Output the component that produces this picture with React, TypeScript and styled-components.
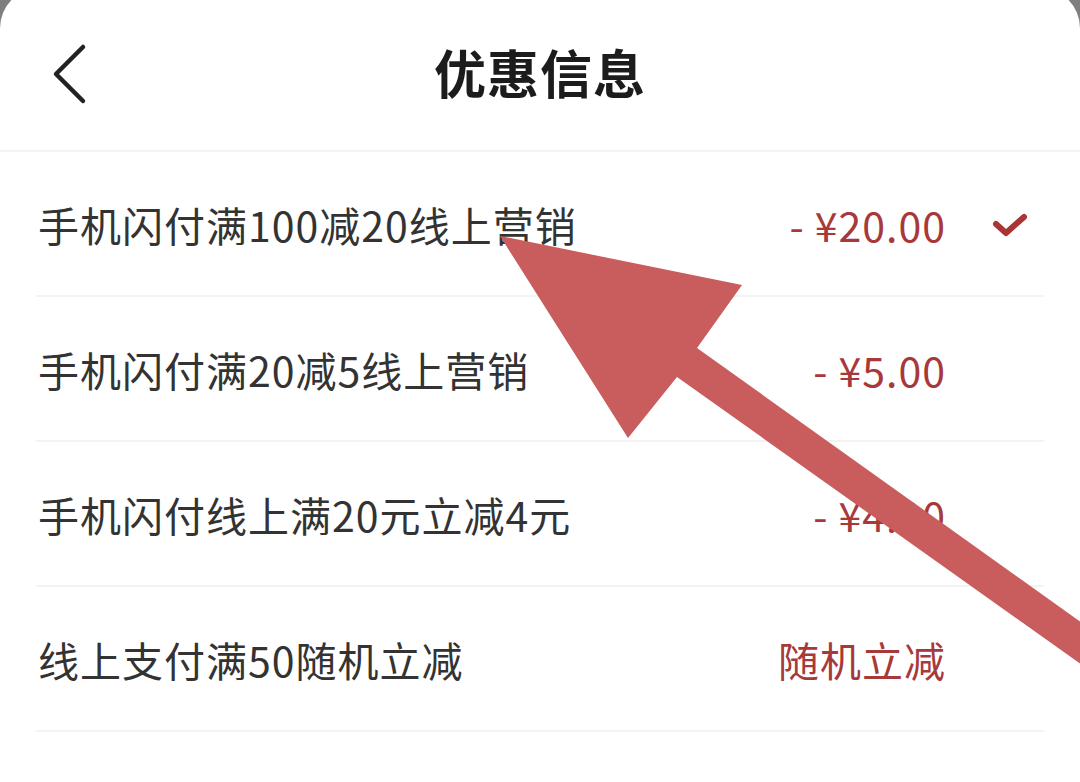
import styled, { createGlobalStyle } from "styled-components";

interface Offer {
  title: string;
  amount: string;
  selected?: boolean;
}

const offers: Offer[] = [
  { title: "手机闪付满100减20线上营销", amount: "- ¥20.00", selected: true },
  { title: "手机闪付满20减5线上营销", amount: "- ¥5.00" },
  { title: "手机闪付线上满20元立减4元", amount: "- ¥4.00" },
  { title: "线上支付满50随机立减", amount: "随机立减" },
];

const GlobalStyle = createGlobalStyle`
  html, body {
    margin: 0;
    padding: 0;
    width: 1080px;
    height: 782px;
    overflow: hidden;
    background: #7f7f7f;
  }
  * {
    box-sizing: border-box;
  }
`;

const Screen = styled.div`
  position: relative;
  width: 1080px;
  height: 782px;
  overflow: hidden;
  font-family: "Noto Sans CJK SC", "Noto Sans", sans-serif;
`;

const Sheet = styled.div`
  margin-top: -12px;
  padding-top: 12px;
  height: 806px;
  background: #ffffff;
  border-radius: 40px 40px 0 0;
  display: flex;
  flex-direction: column;
`;

const Header = styled.header`
  position: relative;
  height: 152px;
  display: flex;
  align-items: center;
  justify-content: center;
  border-bottom: 2px solid #f4f4f4;
`;

const BackButton = styled.button`
  position: absolute;
  left: 48px;
  top: 40px;
  width: 44px;
  height: 66px;
  padding: 0;
  border: none;
  background: none;
  display: flex;
  align-items: center;
  justify-content: center;
`;

const Title = styled.h1`
  margin: 0 0 6px;
  font-size: 52px;
  font-weight: 700;
  color: #1c1c1c;
  letter-spacing: 1px;
  line-height: 1;
`;

const List = styled.ul`
  list-style: none;
  margin: 0;
  padding: 0 36px;
`;

const Row = styled.li`
  height: 145px;
  display: flex;
  align-items: center;
  padding: 0 0 0 2px;
  border-bottom: 2px solid #f3f3f3;
`;

const Label = styled.span`
  flex: 1;
  font-size: 41px;
  letter-spacing: 1px;
  color: #333333;
  white-space: nowrap;
`;

const Amount = styled.span`
  font-size: 41px;
  letter-spacing: 1px;
  color: #a8393a;
  white-space: nowrap;
`;

const CheckSlot = styled.span`
  width: 98px;
  display: flex;
  justify-content: flex-end;
  padding: 4px 16px 0 0;
`;

const Overlay = styled.svg`
  position: absolute;
  top: 0;
  left: 0;
  width: 1080px;
  height: 782px;
  pointer-events: none;
`;

const Check = () => (
  <svg width="36" height="26" viewBox="0 0 36 26">
    <path
      d="M4 11 L14 20 L32 4"
      fill="none"
      stroke="#ab3535"
      strokeWidth="6"
      strokeLinecap="round"
      strokeLinejoin="round"
    />
  </svg>
);

const App = () => {
  return (
    <Screen>
      <GlobalStyle />
      <Sheet>
        <Header>
          <BackButton aria-label="返回">
            <svg width="40" height="64" viewBox="0 0 40 64">
              <path
                d="M33 6 L6 33 L33 60"
                fill="none"
                stroke="#222"
                strokeWidth="4.5"
                strokeLinecap="round"
                strokeLinejoin="round"
              />
            </svg>
          </BackButton>
          <Title>优惠信息</Title>
        </Header>
        <List>
          {offers.map((o) => (
            <Row key={o.title}>
              <Label>{o.title}</Label>
              <Amount>{o.amount}</Amount>
              <CheckSlot>{o.selected && <Check />}</CheckSlot>
            </Row>
          ))}
        </List>
      </Sheet>
      {/* annotation arrow drawn over the screenshot */}
      <Overlay viewBox="0 0 1080 782">
        <polygon
          points="500,236 742,285 697,348 1120,650 1120,692 677,377 628,438"
          fill="#c95d5d"
        />
      </Overlay>
    </Screen>
  );
};

export default App;
